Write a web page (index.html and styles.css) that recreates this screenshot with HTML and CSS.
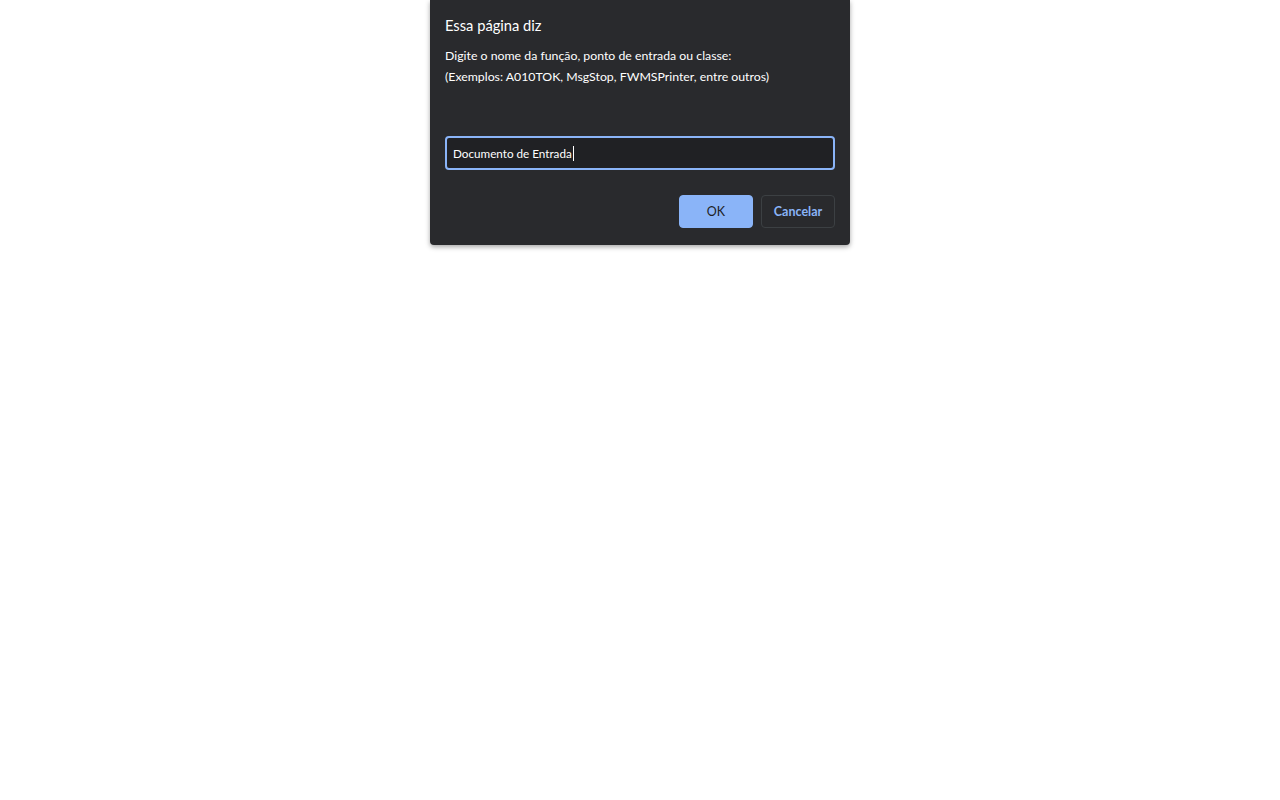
FILE: index.html
```html
<!DOCTYPE html>
<html lang="pt-BR">
<head>
<meta charset="utf-8">
<title>Essa página diz</title>
<link rel="stylesheet" href="styles.css">
</head>
<body>
<div class="page">
  <div class="dialog" role="dialog">
    <div class="title">Essa página diz</div>
    <div class="message">
      <div>Digite o nome da função, ponto de entrada ou classe:</div>
      <div>(Exemplos: A010TOK, MsgStop, FWMSPrinter, entre outros)</div>
    </div>
    <div class="field"><span class="value">Documento de Entrada</span><span class="caret"></span></div>
    <div class="actions">
      <button class="btn btn-ok">OK</button>
      <button class="btn btn-cancel">Cancelar</button>
    </div>
  </div>
</div>
</body>
</html>
```
FILE: styles.css
```css
html, body {
  margin: 0;
  padding: 0;
  background: #ffffff;
}
.page {
  width: 1280px;
  height: 800px;
  display: flex;
  justify-content: center;
  align-items: flex-start;
  font-family: "Lato", "Noto Sans", sans-serif;
}
.dialog {
  width: 420px;
  box-sizing: border-box;
  background: #292a2d;
  border-radius: 0 0 4px 4px;
  box-shadow: 0 2px 5px rgba(0,0,0,0.35);
  padding: 15px 15px 17px 15px;
  color: #e8eaed;
}
.title {
  font-size: 14.7px;
  line-height: 20px;
  color: #ffffff;
}
.message {
  margin-top: 10px;
  font-size: 12.3px;
  line-height: 21px;
  color: #ffffff;
  height: 91px;
}
.field {
  height: 34px;
  box-sizing: border-box;
  border: 2px solid #8ab4f8;
  border-radius: 4px;
  background: #202124;
  display: flex;
  align-items: center;
  padding: 0 6px;
  font-size: 11.7px;
  color: #ffffff;
}
.caret {
  display: inline-block;
  width: 1px;
  height: 15px;
  background: #ffffff;
  margin-left: 1px;
}
.actions {
  margin-top: 25px;
  display: flex;
  justify-content: flex-end;
  gap: 8px;
}
.btn {
  width: 74px;
  height: 33px;
  box-sizing: border-box;
  border-radius: 4px;
  font-family: inherit;
  font-size: 12.5px;
  cursor: pointer;
}
.btn-ok {
  background: #8ab4f8;
  border: 1px solid #8ab4f8;
  color: #202124;
}
.btn-cancel {
  background: #292a2d;
  border: 1px solid #3c4043;
  color: #8ab4f8;
  font-weight: bold;
}
```
